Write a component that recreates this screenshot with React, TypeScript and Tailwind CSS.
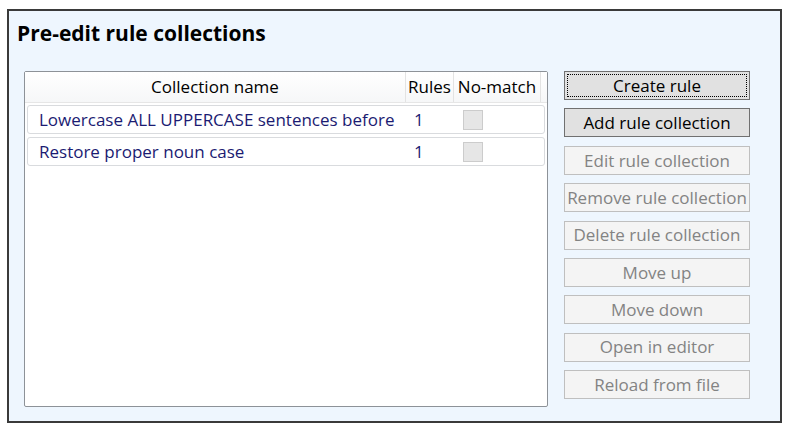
const font = { fontFamily: '"Segoe UI", "Open Sans", "Noto Sans", sans-serif' };

const rows = [
  { name: "Lowercase ALL UPPERCASE sentences before", rules: 1 },
  { name: "Restore proper noun case", rules: 1 },
];

const buttons = [
  { label: "Create rule", kind: "focus" },
  { label: "Add rule collection", kind: "normal" },
  { label: "Edit rule collection", kind: "disabled" },
  { label: "Remove rule collection", kind: "disabled" },
  { label: "Delete rule collection", kind: "disabled" },
  { label: "Move up", kind: "disabled" },
  { label: "Move down", kind: "disabled" },
  { label: "Open in editor", kind: "disabled" },
  { label: "Reload from file", kind: "disabled" },
];

const WinButton = ({ label, kind }: { label: string; kind: string }) => {
  if (kind === "disabled") {
    return (
      <div className="flex h-[29px] items-center justify-center whitespace-nowrap border border-[#bfbfbf] bg-[#f4f4f4] text-[17px] text-[#838383]">
        {label}
      </div>
    );
  }
  return (
    <div className="flex h-[29px] items-center justify-center whitespace-nowrap border border-[#707070] bg-[#e1e1e1] p-[2px] text-[17px] text-black">
      <div
        className={
          "flex h-full w-full items-center justify-center " +
          (kind === "focus" ? "border border-dotted border-black" : "border border-transparent")
        }
      >
        {label}
      </div>
    </div>
  );
};

export default function App() {
  return (
    <div className="h-[432px] w-[794px] bg-white pl-[7px] pt-[9px]" style={font}>
      <div className="flex h-[414px] w-[775px] flex-col border-2 border-[#3a3a3a] bg-[#eef6fe]">
        <h1 className="pl-[8px] pt-[9px] text-[21px] font-bold leading-[27px] text-black">
          Pre-edit rule collections
        </h1>
        <div className="mt-[24px] flex gap-[16px] pl-[15px]">
          <div className="h-[336px] w-[524px] rounded-[2px] border border-[#8d9298] bg-white">
            <div className="flex h-[31px] border-b border-[#e6e6e6] bg-gradient-to-b from-white to-[#f6f7f8] text-[17px] text-black">
              <div className="flex flex-1 items-center justify-center border-r border-[#e3e3e3]">Collection name</div>
              <div className="flex w-[48px] items-center justify-center border-r border-[#e3e3e3]">Rules</div>
              <div className="flex w-[87px] items-center justify-center whitespace-nowrap border-r border-[#e3e3e3]">No-match</div>
              <div className="w-[6px]" />
            </div>
            <div className="flex flex-col gap-[3px] px-[2px] pt-[2px]">
              {rows.map((r) => (
                <div
                  key={r.name}
                  className="flex h-[29px] items-center rounded-[3px] border border-[#d9dbde] bg-white text-[17px] text-[#1b1b72]"
                >
                  <div className="flex-1 whitespace-nowrap pl-[11px]">{r.name}</div>
                  <div className="w-[48px] pl-[11px]">{r.rules}</div>
                  <div className="flex w-[87px] items-center pl-[12px]">
                    <div className="h-[20px] w-[20px] border border-[#cccccc] bg-[#e6e6e6]" />
                  </div>
                  <div className="w-[6px]" />
                </div>
              ))}
            </div>
          </div>
          <div className="flex w-[186px] flex-col gap-[8.4px]">
            {buttons.map((b) => (
              <WinButton key={b.label} label={b.label} kind={b.kind} />
            ))}
          </div>
        </div>
      </div>
    </div>
  );
}
